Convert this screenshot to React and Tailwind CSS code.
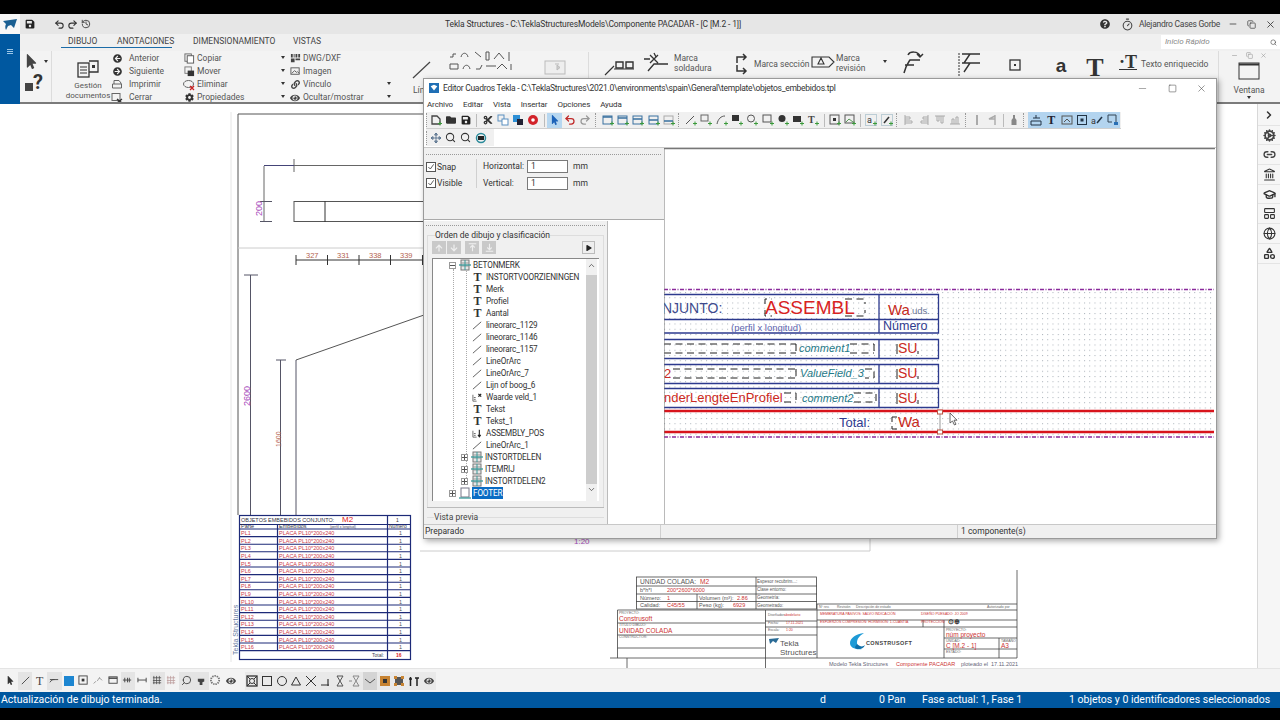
import {
  ChevronRight, Cog, Landmark, GraduationCap, LayoutPanelTop, Globe, Shapes, Timer, Minus, Square, X, Copy, Search,
  Undo2, Redo2, History, Link2, ChevronUp, ChevronDown,
} from "lucide-react";
import {
  FaArrowCircleLeft, FaArrowCircleRight, FaCog, FaQuestionCircle, FaSave, FaMousePointer, FaLink, FaEye, FaPlay, FaFolder,
  FaCut, FaArrowUp, FaArrowDown,
} from "react-icons/fa";

function Ic({ children, size = 12, box = 12, className = "" }) {
  return (
    <svg width={size} height={size} viewBox={`0 0 ${box} ${box}`} fill="none" className={"shrink-0 " + className}>
      {children}
    </svg>
  );
}

function Caret({ className = "" }) {
  return <span className={"block w-0 h-0 border-x-[2.5px] border-x-transparent border-t-[3px] border-t-[#333] " + className} />;
}

/* ribbon */
function RibbonList({ items, className = "" }) {
  return (
    <div className={"flex flex-col h-[53px] pt-[1px] " + className}>
      {items.map(([icon, label]) => (
        <div key={label} className="flex items-center h-[13px] shrink-0">
          <span className="w-[12px] flex justify-center shrink-0">{icon}</span>
          <span className="text-[8.5px] text-[#555] leading-none whitespace-nowrap ml-[inherit]">{label}</span>
        </div>
      ))}
    </div>
  );
}

const docIcon = (
  <Ic size={11}>
    <rect x="1" y="1" width="7" height="8" stroke="#666" />
    <rect x="3.5" y="3" width="7" height="8" fill="#fff" stroke="#555" />
  </Ic>
);
const docX = (
  <Ic size={12}>
    <rect x="1" y="1.5" width="8" height="7" stroke="#666" />
    <path d="M6 7l5 4M11 7l-5 4" stroke="#333" strokeWidth="1.4" />
  </Ic>
);

function Ribbon() {
  return (
    <div className="flex h-[53px] bg-[#f3f3f3] border-b-2 border-[#7b7b7b] overflow-hidden">
      <div className="w-[32px] shrink-0 border-r border-[#dcdcdc] flex flex-col pl-[4px] pt-[3px] gap-[2px]">
        <div className="flex items-center gap-[5px]">
          <FaMousePointer size={15} color="#444" />
          <Caret />
        </div>
        <div className="flex items-end pl-[1px]">
          <span className="block w-[8px] h-[8px] bg-[#444] mb-[2px]" />
          <span className="text-[20px] font-bold leading-[22px] text-[#333]">?</span>
        </div>
      </div>
      <div className="w-[44px] ml-[14px] shrink-0 flex flex-col items-center pt-[9px]">
        <svg width="22" height="18" viewBox="0 0 22 18" fill="none" className="shrink-0">
          <rect x="1" y="3" width="11" height="14" stroke="#333" strokeWidth="1.3" />
          <path d="M3 7h7M3 10h7M3 13h7" stroke="#333" />
          <path d="M12 1h9v11h-9" stroke="#333" strokeWidth="1.3" />
          <rect x="15" y="5" width="3" height="3" fill="#333" />
        </svg>
        <span className="text-[8px] text-[#555] leading-[10px] mt-[3px] text-center">Gestión<br />documentos</span>
      </div>
      <RibbonList
        className="ml-[1px] w-[72px] shrink-0 [&_span+span]:ml-[6px]"
        items={[
          [<FaArrowCircleLeft size={9} color="#333" />, "Anterior"],
          [<FaArrowCircleRight size={9} color="#333" />, "Siguiente"],
          [<Ic size={12}><path d="M3 5V1.5h5L10 4v1M1.5 5h9v4h-9z" stroke="#666" /></Ic>, "Imprimir"],
          [docX, "Cerrar"],
        ]}
      />
      <RibbonList
        className="w-[98px] shrink-0 [&_span+span]:ml-[2px]"
        items={[
          [docIcon, "Copiar"],
          [<Ic size={11}><rect x="1" y="1" width="7" height="7" stroke="#777" /><rect x="4" y="5" width="7" height="6" fill="#333" /></Ic>, "Mover"],
          [<Ic size={12}><ellipse cx="5.5" cy="5" rx="5" ry="3.5" stroke="#666" /><path d="M7 7l4 4M11 7l-4 4" stroke="#c22" strokeWidth="1.3" /></Ic>, "Eliminar"],
          [<FaCog size={9} color="#333" />, "Propiedades"],
        ]}
      />
      <div className="flex flex-col justify-between h-[52px] py-[5px] w-[8px] shrink-0">
        <Caret /><Caret /><Caret /><Caret />
      </div>
      <RibbonList
        className="w-[97px] shrink-0 [&_span+span]:ml-[2px]"
        items={[
          [<Ic size={11}><path d="M1 1h2v4H1zM4 1h1v4H4zM6 1h2v4H6zM9 1h2v4H9zM1 6h4v4H1zM6 6h5v2H6z" fill="#444" /></Ic>, "DWG/DXF"],
          [<Ic size={11}><rect x="1" y="2" width="9" height="7" stroke="#555" /><path d="M2 8l3-3 2 2 1-1 2 2" stroke="#555" /></Ic>, "Imagen"],
          [<FaLink size={9} color="#444" />, "Vínculo"],
          [<FaEye size={10} color="#444" />, "Ocultar/mostrar"],
        ]}
      />
      <div className="flex flex-col h-[52px] w-[5px] shrink-0 pt-[31px] gap-[10px] ml-[1px]">
        <Caret /><Caret />
      </div>
      <svg width="40" height="52" viewBox="0 0 40 52" fill="none" className="shrink-0 ml-[8px]">
        <path d="M13 27 L30 11" stroke="#444" strokeWidth="1.2" />
        <text x="13" y="42" fontSize="8.5" fill="#555">Lín</text>
      </svg>
      <svg width="135" height="52" viewBox="0 0 135 52" fill="none" className="shrink-0 ml-[4px]">
        <g stroke="#555">
          <path d="M6 6h3v-3h3M17 6c1-5 6-5 7 0M31 1l6 5M42 1h3v8h-3zM50 8l5-6 5 6M65 1v9" />
          <path d="M6 13h8v5H6zM19 18c1-5 6-5 7 0M32 18h4l2-4M42 15h10M53 18l5-5 5 5M67 13v6" />
        </g>
        <rect x="101" y="10" width="20" height="13" stroke="#bbb" fill="#eee" />
        <path d="M111 13h4M113 14l3 2.500-3 2.500z" fill="#ccc" stroke="#bbb" />
      </svg>
      <span className="w-px h-[50px] bg-[#dcdcdc] mt-[1px] ml-[9px]" />
      <svg width="50" height="52" viewBox="0 0 50 52" fill="none" className="shrink-0">
        <path d="M27 11h7v6h-7zM37 11h7v6h-7z" stroke="#333" strokeWidth="1.4" />
        <path d="M16 24l9-9M25 18h20" stroke="#333" strokeWidth="1.2" />
      </svg>
      <svg width="28" height="52" viewBox="0 0 28 52" fill="none" className="shrink-0 ml-[3px]">
        <path d="M8 4l8 8M16 4l-8 8M2 8l6 0M12 2l2 4M6 20l6-7h14" stroke="#333" strokeWidth="1.3" />
      </svg>
      <div className="w-[60px] ml-[4px] shrink-0 text-[8.5px] leading-[10px] text-[#555] pt-[2px]">Marca<br />soldadura</div>
      <svg width="19" height="52" viewBox="0 0 19 52" fill="none" className="shrink-0">
        <path d="M3 12V6h8M9 3l3 3-3 3M3 14v6h8M9 17l3 3-3 3" stroke="#333" strokeWidth="1.5" />
      </svg>
      <div className="w-[56px] ml-[1px] shrink-0 text-[8.5px] text-[#555] pt-[7px] whitespace-nowrap">Marca sección</div>
      <svg width="25" height="52" viewBox="0 0 25 52" fill="none" className="shrink-0 ml-[1px]">
        <path d="M1 6h17l5 5-5 5H1zM10 7l3 6H7z" stroke="#333" strokeWidth="1.1" />
      </svg>
      <div className="w-[47px] shrink-0 text-[8.5px] leading-[10px] text-[#555] pt-[2px]">Marca<br />revisión</div>
      <Caret className="mt-[9px] shrink-0" />
      <svg width="134" height="52" viewBox="0 0 134 52" fill="none" className="shrink-0 ml-[9px]">
        <path d="M12 4c2-4 10-4 12 1M21 3l3 3 3-3M8 22c2-8 4-10 6-13h10M9 14h9" stroke="#333" strokeWidth="1.5" />
        <path d="M63 2v24" stroke="#333" strokeWidth="1" strokeDasharray="2 1" />
        <path d="M66 3h18M68 12l6-9M66 12h18M68 21l6-9" stroke="#333" strokeWidth="1.4" />
        <rect x="114" y="9" width="10" height="10" stroke="#333" strokeWidth="1.3" />
        <rect x="118" y="13" width="2" height="2" fill="#333" />
      </svg>
      <div className="w-[34px] ml-[14px] shrink-0 flex flex-col items-center">
        <span className="text-[19px] font-bold leading-[24px] text-[#333] mt-[3px] font-['Liberation_Sans',sans-serif]">a</span>
        <span className="w-[16px] h-[2px] bg-[#333]" />
      </div>
      <span className="w-[34px] shrink-0 text-[26px] font-bold leading-[28px] text-[#333] text-center font-['Liberation_Serif',serif] mt-[3px]">T</span>
      <div className="flex items-start w-[96px] ml-[7px] shrink-0 pt-[1px]">
        <span className="text-[18px] font-bold leading-[20px] text-[#333] font-['Liberation_Serif',serif] underline w-[16px]">·T</span>
        <span className="text-[8.5px] text-[#555] ml-[6px] mt-[6px] whitespace-nowrap">Texto enriquecido</span>
      </div>
      <div className="w-px h-[52px] bg-[#dcdcdc] ml-[3px] shrink-0" />
      <div className="w-[60px] shrink-0 flex flex-col items-center">
        <div className="flex w-full justify-between px-[12px] pt-[1px] text-[#999]">
          <Minus size={7} /><Copy size={7} /><X size={7} />
        </div>
        <svg width="22" height="18" viewBox="0 0 22 18" fill="none" className="shrink-0 mt-[3px]">
          <rect x="1" y="1" width="20" height="16" stroke="#333" />
          <path d="M1 2.500h20" stroke="#333" strokeWidth="2" />
        </svg>
        <span className="text-[8.5px] text-[#555] leading-none mt-[6px]">Ventana</span>
        <Caret className="mt-[1px]" />
      </div>
    </div>
  );
}

/* main drawing, coordinates are page coordinates */
function Drawing() {
  const rows = Array.from({ length: 16 }, (_, i) => i);
  const rowH = 7.6;
  const top = 529;
  return (
    <svg width="1257" height="564" viewBox="0 104 1257 564" fill="none" className="shrink-0 bg-white font-['Liberation_Sans',sans-serif]">
      <path d="M231 112V662" stroke="#e6e6e6" />
      <path d="M238 114H424M238 114V515" stroke="#555" />
      <path d="M238 248H424" stroke="#ccc" />
      {/* upper view */}
      <path d="M294 165.500H424M264 166V222M294 159V172" stroke="#666" />
      <path d="M264 165.500H294" stroke="#447" />
      <path d="M260 201.500H272M260 221.500H272" stroke="#556" />
      <rect x="294" y="201.500" width="130" height="20" stroke="#555" />
      <path d="M325 201V222" stroke="#333" />
      <text transform="translate(262 216) rotate(-90)" fontSize="9" fill="#a84dbb">200</text>
      {/* dims */}
      <path d="M296 260H424M296 255V265M327.500 255V265M359 255V265M390.500 255V265M422.500 255V265" stroke="#333" />
      {[["327", 306], ["331", 337], ["338", 369], ["339", 400]].map(([t, x]) => (
        <text key={t} x={x} y="258" fontSize="7.500" fill="#b4634f">{t}</text>
      ))}
      <path d="M250.500 275V515M244 275H258M280.500 360V515M276 360H286M296 360V515" stroke="#556" />
      <path d="M296 360L424 315" stroke="#555" />
      <text transform="translate(250 406) rotate(-90)" fontSize="9" fill="#a84dbb">2600</text>
      <text transform="translate(281 447) rotate(-90)" fontSize="7" fill="#b4634f">1600</text>

      {/* embedded objects table */}
      <g stroke="#1d2a78">
        <rect x="239.500" y="515.500" width="171" height="144" strokeWidth="1.2" />
        <path d="M239 524.500H410M387.500 515V659M277.500 524V651" strokeWidth="1.2" />
        <path d={rows.map((i) => `M239 ${top + i * rowH}H410`).join("") + `M239 ${top + 16 * rowH}H410`} strokeWidth="1.1" />
      </g>
      <text x="241" y="522" fontSize="5.500" fill="#334">OBJETOS EMBEBIDOS CONJUNTO:</text>
      <text x="342" y="522" fontSize="8" fill="#d22">M2</text>
      <text x="396" y="522" fontSize="5" fill="#333">1</text>
      <text x="241" y="528" fontSize="5.500" fill="#334">Parte</text>
      <text x="279" y="528" fontSize="5.500" fill="#334">Embebidos</text>
      <text x="330" y="528" fontSize="3.500" fill="#445">(perfil x longitud)</text>
      <text x="389" y="528" fontSize="5" fill="#334">Número</text>
      {rows.map((i) => (
        <g key={i}>
          <text x="241" y={top + 6.2 + i * rowH} fontSize="5.500" fill="#cc3b4a">{`PL${i + 1}`}</text>
          <text x="279" y={top + 6.2 + i * rowH} fontSize="5.500" fill="#cc3b4a">PLACA PL10*200x240</text>
          <text x="399" y={top + 6.2 + i * rowH} fontSize="5.500" fill="#555">1</text>
        </g>
      ))}
      <text x="372" y="657" fontSize="5" fill="#445">Total:</text>
      <text x="396" y="657" fontSize="5" fill="#d22" fontWeight="bold">16</text>
      <text transform="translate(238 655) rotate(-90)" fontSize="7" fill="#667aa0">Tekla Structures</text>

      {/* window outline behind the dialog */}
      <path d="M870 539V551H420" stroke="#ccc" />
      <text x="574" y="544" fontSize="8" fill="#a84dbb">1:20</text>

      {/* title block */}
      <g stroke="#444" strokeWidth="0.800">
        <rect x="636.500" y="577" width="180" height="32" />
        <path d="M636 586H817M636 594H817M636 601.500H817M756 577V609M697 594V609" />
        <path d="M617.500 610H1017M617.500 610V658M765.500 610V668M817 604V658M617.500 623H765M617.500 635H765M617.500 648H765M765 621H817M765 627H817M765 635H817M817 604H1017M817 620H1017M817 627H1017M1017 570V658M944 620V658M944 638H1017M944 649H1017M999 638V658M610 658H1017M627 658V668M923 620V627" />
      </g>
      <g fontSize="5.500" fill="#555">
        <text x="640" y="584" fontSize="6.600">UNIDAD COLADA:</text>
        <text x="700" y="584" fontSize="6.600" fill="#c33">M2</text>
        <text x="640" y="592">b*h*l</text>
        <text x="667" y="592" fill="#c33">200*2600*6000</text>
        <text x="640" y="600">Número:</text>
        <text x="667" y="600" fill="#c33">1</text>
        <text x="699" y="600">Volumen (m³):</text>
        <text x="737" y="600" fill="#c33">2.86</text>
        <text x="640" y="607">Calidad:</text>
        <text x="667" y="607" fill="#c33">C45/55</text>
        <text x="699" y="607">Peso (kg):</text>
        <text x="733" y="607" fill="#c33">6929</text>
        <text x="757" y="583" fontSize="4.500">Espesor recubrim...:</text>
        <text x="757" y="591" fontSize="4.500">Clase entorno:</text>
        <text x="757" y="599" fontSize="4.500">Geometría:</text>
        <text x="757" y="607" fontSize="4.500">Geometrado:</text>
      </g>
      <g fontSize="3.500" fill="#666">
        <text x="619" y="614">PROYECTO:</text>
        <text x="619" y="626">TÍTULO DIBUJO:</text>
        <text x="619" y="638">CONSTRUCTOR:</text>
        <text x="768" y="616">Diseñador:</text>
        <text x="784" y="616" fill="#c33">abedelario</text>
        <text x="768" y="624">Fecha:</text>
        <text x="786" y="624" fill="#c33">17.11.2021</text>
        <text x="768" y="631">Escala:</text>
        <text x="786" y="631" fill="#c33">1:20</text>
        <text x="819" y="608">Nº rev.</text>
        <text x="837" y="608">Revisión</text>
        <text x="856" y="608">Descripción de estado</text>
        <text x="987" y="608">Autorizado por</text>
        <text x="820" y="615" fill="#c33">MEMBRATURA PASIVOS: SALVO INDICACIÓN</text>
        <text x="820" y="623" fill="#c33">ESFUERZOS COMPRESIÓN: HORMIGÓN: 1-CUANTÍA</text>
        <text x="921" y="615" fill="#c33">DISEÑO PUESADO: JO 2009</text>
        <text x="921" y="623" fill="#c33">PROTECCIÓN:</text>
        <text x="946" y="631">PROYECTO:</text>
        <text x="946" y="642">UNIDAD:</text>
        <text x="1001" y="642">TAMAÑO</text>
        <text x="946" y="653">ESTADO:</text>
      </g>
      <g fontSize="6.500" fill="#c33">
        <text x="619" y="621">Construsoft</text>
        <text x="619" y="633">UNIDAD COLADA</text>
        <text x="946" y="637">núm proyecto</text>
        <text x="946" y="648">C  [M.2 - 1]</text>
        <text x="1001" y="648">A3</text>
      </g>
      <text x="948" y="624" fontSize="7" fill="#333" fontWeight="bold">⊙⊕</text>
      {/* Tekla logo */}
      <path d="M769 639l10-1-3 5-3-2-3 3z" fill="#2a6b96" />
      <text x="780" y="646" fontSize="8" fill="#555">Tekla</text>
      <text x="780" y="655" fontSize="8" fill="#555">Structures</text>
      {/* Construsoft logo */}
      <path d="M864 633c-8 1-14 5-14 10s6 7 12 6c-4-2-5-4-5-6 0-4 2-7 7-10z" fill="#1d9ad6" />
      <path d="M857 644c3 3 6 3 8 1-1 3-4 4-7 4-2 0-3-1-3-2z" fill="#0d6da8" />
      <text x="866" y="645" fontSize="5.500" fontWeight="bold" fill="#444" letterSpacing=".4">CONSTRUSOFT</text>
      {/* footer */}
      <g fontSize="5.500" fill="#667">
        <text x="829" y="666">Modelo Tekla Structures</text>
        <text x="896" y="666" fill="#c33">Componente PACADAR</text>
        <text x="961" y="666">ploteado el</text>
        <text x="991" y="666">17.11.2021</text>
      </g>
    </svg>
  );
}

/* dialog toolbar icon sets */
const plus = <path d="M8 9.500h4M10 7.500v4" stroke="#3a9a3a" strokeWidth="1" />;
const bk = "#444";
const toolRow = [
  ["new", <Ic><path d="M2 2h5l3 3v5H2z" stroke={bk} strokeWidth="1.3" />{plus}</Ic>],
  ["open", <FaFolder size={10} color="#333" />],
  ["save", <FaSave size={10} color="#222" />],
  ["s", null],
  ["cut", <FaCut size={10} color="#333" />],
  ["copy", <Ic><rect x="1" y="1" width="6" height="6" stroke="#5a8fc0" /><rect x="5" y="5" width="6" height="6" stroke="#5a8fc0" fill="#fff" /></Ic>],
  ["paste", <Ic><rect x="1" y="1" width="7" height="7" fill="#2d8fd5" /><rect x="5" y="5" width="6" height="6" fill="#223" /></Ic>],
  ["stop", <Ic><circle cx="6" cy="6" r="5" fill="#d2232a" /><circle cx="6" cy="6" r="1.800" fill="#fff" /></Ic>],
  ["s2", null],
  ["arrow", <FaMousePointer size={10} color="#1c62b8" />, true],
  ["undo", <Undo2 size={12} color="#c02a2a" strokeWidth={2.5} />],
  ["redo", <Redo2 size={12} color="#999" strokeWidth={2.5} />],
  ["g1", "grip"],
  ...["a", "b", "c", "d", "e"].map((k, i) => [
    "tb" + k,
    <Ic><rect x="1" y="2" width="9" height="8" stroke={i === 4 ? "#aaa" : "#39709f"} /><path d={`M1 ${3 + i}h9`} stroke="#39709f" strokeWidth="1.5" />{plus}</Ic>,
  ]),
  ["g2", "grip"],
  ["l1", <Ic><path d="M1 10L9 2" stroke="#555" />{plus}</Ic>],
  ["l2", <Ic><rect x="1" y="1" width="7" height="6" stroke="#666" />{plus}</Ic>],
  ["l3", <Ic><path d="M1 10c1-5 4-8 8-8" stroke="#555" />{plus}</Ic>],
  ["l4", <Ic><rect x="1" y="1" width="7" height="6" fill="#333" />{plus}</Ic>],
  ["l5", <Ic><circle cx="5" cy="4.500" r="3.500" stroke="#555" />{plus}</Ic>],
  ["l6", <Ic><rect x="1" y="1" width="8" height="7" stroke="#555" />{plus}</Ic>],
  ["l7", <Ic><circle cx="5" cy="4.500" r="3.500" fill="#333" />{plus}</Ic>],
  ["l8", <Ic><rect x="1" y="2" width="8" height="6" fill="#333" />{plus}</Ic>],
  ["l9", <Ic><text x="1" y="9" fontSize="10" fontWeight="bold" fill="#444" fontFamily="Liberation Serif">T</text>{plus}</Ic>],
  ["s3", null],
  ["m1", <Ic><rect x="1" y="1" width="9" height="9" stroke="#555" /><rect x="4" y="4" width="3" height="3" fill="#333" />{plus}</Ic>],
  ["m2", <Ic><rect x="1" y="1" width="9" height="8" stroke="#555" /><path d="M2 8l3-3 4 3" stroke="#5a9a5a" />{plus}</Ic>],
  ["s4", null],
  ["m3", <Ic><rect x="0.500" y="0.500" width="11" height="11" stroke="#8ab" strokeDasharray="1 1" /><text x="2" y="9" fontSize="9" fill="#333">a</text>{plus}</Ic>],
  ["m4", <Ic><rect x="0.500" y="0.500" width="11" height="11" stroke="#8ab" strokeDasharray="1 1" /><path d="M3 9l5-6" stroke="#333" strokeWidth="1.500" />{plus}</Ic>],
  ["g3", "grip"],
  ["n1", <Ic><path d="M2 1v10M2 3h5v2H2M2 7h7v2H2" stroke="#aaa" /></Ic>],
  ["n2", <Ic><path d="M10 1v10M10 3H5v2h5M10 7H3v2h7" stroke="#aaa" /></Ic>],
  ["n3", <Ic><path d="M1 2h10M3 2v5h2V2M7 2v7h2V2" stroke="#aaa" /></Ic>],
  ["n4", <Ic><path d="M1 10h10M3 10V5h2v5M7 10V3h2v7" stroke="#aaa" /></Ic>],
  ["g4", "grip"],
  ["o1", <Ic><path d="M5 1h2v10H5z" fill="#aaa" /></Ic>],
  ["o2", <Ic><path d="M9 1v10M9 2L3 5h6" stroke="#aaa" strokeWidth="1.400" /></Ic>],
  ["s5", null],
  ["o3", <Ic><path d="M5 1h2v3l1.500 2v5h-5V6L5 4z" fill="#888" /></Ic>],
  ["g5", "grip"],
];
const blueRow = [
  <Ic><path d="M6 1v3M3 4h7M1 7h10v4H1z" stroke="#234" /></Ic>,
  <span className="text-[12px] font-bold leading-none text-[#223] font-['Liberation_Serif',serif]">T</span>,
  <Ic><rect x="1" y="2" width="10" height="8" stroke="#555" /><path d="M3 8l3-3 3 3" stroke="#555" /></Ic>,
  <Ic><rect x="1.500" y="1.500" width="9" height="9" stroke="#234" /><rect x="4.500" y="4.500" width="3" height="3" fill="#234" /></Ic>,
  <Ic><text x="0" y="10" fontSize="9" fill="#333">a</text><path d="M6 9l5-6" stroke="#234" strokeWidth="1.500" /></Ic>,
  <Ic><path d="M1 1h8v7" stroke="#345" /><path d="M1 1v7h4" stroke="#345" /><rect x="7" y="8" width="4" height="3" fill="#2a6fb5" /></Ic>,
];

function Grip({ first }) {
  return <span className={"h-[14px] w-[3px] border-l border-dotted border-[#999] " + (first ? "mr-[-1px]" : "mx-[2px]")} />;
}

function DialogToolbar() {
  return (
    <div className="flex h-[17px] pl-[2px] items-center bg-white">
      <div className="flex items-center h-full bg-[#f0f0f0] pr-[1px] border-b border-[#cfcfcf]">
        <Grip first />
        {toolRow.map(([k, icon, active]) => {
          if (icon === null) return <span key={k} className="w-px h-[13px] bg-[#bbb] mx-[2.5px]" />;
          if (icon === "grip") return <Grip key={k} />;
          return (
            <span key={k} className={"w-[15.3px] h-[15px] flex items-center justify-center " + (active ? "bg-[#b7d7f0]" : "")}>
              {icon}
            </span>
          );
        })}
        <div className="flex items-center h-full bg-[#b3d4ef]">
          {blueRow.map((icon, i) => (
            <span key={i} className="w-[15.3px] h-[15px] flex items-center justify-center">{icon}</span>
          ))}
        </div>
      </div>
    </div>
  );
}

function Check({ label }) {
  return (
    <div className="flex items-center gap-[1px] h-[10px]">
      <span className="w-[10px] h-[10px] border border-[#555] bg-white flex items-center justify-center">
        <Ic size={8}><path d="M2 6l3 3 5-7" stroke="#444" strokeWidth="1.300" /></Ic>
      </span>
      <span className="text-[8.5px] text-[#333] leading-none">{label}</span>
    </div>
  );
}

function Field({ label }) {
  return (
    <div className="flex items-center h-[13px]">
      <span className="w-[44px] text-[8.5px] text-[#333]">{label}</span>
      <span className="w-[41px] h-[13px] border border-[#7a7a7a] bg-white text-[8.5px] leading-[11px] pl-[3px] text-[#333]">1</span>
      <span className="ml-[5px] text-[8.5px] text-[#333]">mm</span>
    </div>
  );
}

const tIcon = <span className="font-['Liberation_Serif',serif] font-bold text-[12px] leading-none text-[#333] w-[10px] text-center">T</span>;
const lineIcon = <Ic size={11}><path d="M1 10L10 2" stroke="#555" /></Ic>;
const blockIcon = (
  <Ic size={12}>
    <rect x="2" y="1" width="8" height="10" fill="#e6e6e6" stroke="#777" />
    <path d="M2 4h8M2 7h8" stroke="#999" />
    <path d="M0 6h12" stroke="#3a9a9a" strokeWidth="1.300" />
    <path d="M6 1v10" stroke="#3a9a9a" />
  </Ic>
);
const valIcon = (
  <Ic size={11}>
    <path d="M1 3v7h4M2 6h2M2 8h2" stroke="#666" />
    <path d="M7 2l3 3M10 2l-3 3" stroke="#222" strokeWidth="1.400" />
  </Ic>
);
const asmIcon = (
  <Ic size={11}>
    <path d="M1 3v7h4M2 6h2M2 8h2" stroke="#666" />
    <path d="M8 2v7M6.500 7.500L8 9.500l1.500-2" stroke="#222" strokeWidth="1.200" />
  </Ic>
);
const treeRows = [
  ["INSTORTVOORZIENINGEN", tIcon], ["Merk", tIcon], ["Profiel", tIcon], ["Aantal", tIcon],
  ["lineorarc_1129", lineIcon], ["lineorarc_1146", lineIcon], ["lineorarc_1157", lineIcon],
  ["LineOrArc", lineIcon], ["LineOrArc_7", lineIcon], ["Lijn of boog_6", lineIcon],
  ["Waarde veld_1", valIcon], ["Tekst", tIcon], ["Tekst_1", tIcon], ["ASSEMBLY_POS", asmIcon],
  ["LineOrArc_1", lineIcon],
];

function Expander({ minus }) {
  return (
    <span className="w-[7px] h-[7px] border border-[#999] bg-white flex items-center justify-center relative shrink-0">
      <span className="block w-[5px] h-px bg-[#555]" />
      {!minus && <span className="absolute block w-px h-[5px] bg-[#555]" />}
    </span>
  );
}

function TreeRow({ indent, expander, minus, icon, label, selected }) {
  return (
    <div className="flex items-center h-[12px]" style={{ paddingLeft: indent }}>
      <span className="w-[9px] flex items-center shrink-0">{expander && <Expander minus={minus} />}</span>
      <span className="w-[13px] flex justify-center shrink-0">{icon}</span>
      <span className={"text-[8.2px] tracking-[-0.15px] leading-[12px] ml-[1px] px-[1px] whitespace-nowrap " + (selected ? "bg-[#0a6cc4] text-white" : "text-[#333]")}>{label}</span>
    </div>
  );
}

function Tree() {
  return (
    <div className="relative mx-[7px] mt-[4px] h-[243px] border border-[#888] border-r-0 border-b-0 bg-white flex overflow-hidden">
      <div className="relative flex-1 min-w-0 overflow-hidden">
        <span className="absolute left-[20px] top-[10px] h-[226px] border-l border-dotted border-[#aaa]" />
        <span className="absolute left-[33px] top-[10px] h-[213px] border-l border-dotted border-[#aaa]" />
        <TreeRow indent={16} expander minus icon={blockIcon} label="BETONMERK" />
        {treeRows.map(([label, icon]) => (
          <TreeRow key={label} indent={29} icon={icon} label={label} />
        ))}
        <TreeRow indent={28} expander icon={blockIcon} label="INSTORTDELEN" />
        <TreeRow indent={28} expander icon={blockIcon} label="ITEMRIJ" />
        <TreeRow indent={28} expander icon={blockIcon} label="INSTORTDELEN2" />
        <TreeRow indent={16} expander icon={<Ic size={12}><rect x="2" y="1" width="8" height="9" stroke="#778" /><path d="M0 11h12" stroke="#3a9a9a" strokeWidth="1.300" /></Ic>} label="FOOTER" selected />
      </div>
      <div className="w-[11px] mr-[2px] shrink-0 flex flex-col items-center bg-[#f0f0f0]">
        <ChevronUp size={9} color="#444" className="mt-[2px]" />
        <span className="w-full h-[209px] bg-[#cdcdcd] mt-[5px]" />
        <ChevronDown size={9} color="#444" className="mt-[1px]" />
      </div>
    </div>
  );
}

function OrderButton({ children }) {
  return <span className="w-[14px] h-[13px] bg-[#c9c9c9] flex items-center justify-center">{children}</span>;
}

function Canvas() {
  const dash = { stroke: "#222", strokeDasharray: "7 4.5", strokeWidth: 1 };
  return (
    <svg width="551" height="376" viewBox="664 148 551 376" fill="none" className="shrink-0 bg-white font-['Liberation_Sans',sans-serif]">
      <defs>
        <pattern id="dots" x="664" y="292" width="5.250" height="5.250" patternUnits="userSpaceOnUse">
          <rect width="1" height="1" fill="#a8b0b8" />
        </pattern>
      </defs>
      <rect x="664" y="290" width="550" height="146" fill="url(#dots)" />
      <path d="M664 148.500H1215" stroke="#777" strokeWidth="1.500" />
      <path d="M664 289.500H1214M664 437H1214" stroke="#8a2a9c" strokeWidth="1.600" strokeDasharray="4 1.500 1 1.500" />
      <g stroke="#2d3a8e" strokeWidth="1.300">
        <path d="M664 294.500H938.500V333H664M664 319.500H938M879 294V333" />
        <path d="M664 339.500H938.500V358.500H664M879 339V358" />
        <path d="M664 364.500H938.500V383.500H664M879 364V383" />
        <path d="M664 388.500H938.500V407.500H664M879 388V407" />
      </g>
      <path d="M664 411H1214M664 432H1214" stroke="#d8141c" strokeWidth="2.400" />
      <path d="M765 304V299H772M845 299H865V304M765 310V316H772M845 316H865V310" style={dash} />
      <text x="651" y="313" fontSize="14" fill="#3e4a8c">ONJUNTO:</text>
      <text x="765" y="314" fontSize="19" fill="#d8231f">ASSEMBL</text>
      <text x="888" y="315" fontSize="15" fill="#c62a20">Wa</text>
      <text x="912" y="314" fontSize="9.500" fill="#6a7596">uds.</text>
      <text x="883" y="330" fontSize="12.500" fill="#2f3a8e">Número</text>
      <text x="731" y="331" fontSize="9.500" fill="#5b62ad">(perfil x longitud)</text>

      <path d="M664 344H796M664 353H796M796 344V353" style={dash} />
      <text x="799" y="352" fontSize="11" fontStyle="italic" fill="#1f7a88">comment1</text>
      <path d="M850 344H874M874 344V353M850 353H874" style={dash} />
      <text x="898" y="353" fontSize="14" fill="#cc2a22">SU</text>
      <path d="M897 344V354M918 351V354" stroke="#222" />

      <text x="664" y="378" fontSize="13" fill="#cc2a22">2</text>
      <path d="M673 369H796M673 378H796M796 369V378" style={dash} />
      <text x="800" y="377" fontSize="11" fontStyle="italic" fill="#1f7a88">ValueField_3</text>
      <path d="M865 369H874V378H865" style={dash} />
      <text x="898" y="378" fontSize="14" fill="#cc2a22">SU</text>
      <path d="M897 369V379M918 376V379" stroke="#222" />

      <text x="664" y="402" fontSize="13" fill="#cc2a22">nderLengteEnProfiel</text>
      <path d="M784 393H796M784 402H796M796 393V402" style={dash} />
      <text x="802" y="402" fontSize="11" fontStyle="italic" fill="#1f7a88">comment2</text>
      <path d="M854 393H876V402H854" style={dash} />
      <text x="898" y="403" fontSize="14" fill="#cc2a22">SU</text>
      <path d="M897 393V404M918 400V404" stroke="#222" />

      <text x="839" y="427" fontSize="13" fill="#2f3a8e">Total:</text>
      <path d="M892 422V417H897M892 426V429H897" stroke="#222" />
      <text x="898" y="427" fontSize="15" fill="#c62a20">Wa</text>
      <path d="M940 412V432" stroke="#999" />
      <rect x="937.500" y="410" width="5" height="4" fill="#fff" stroke="#b54" />
      <rect x="937.500" y="430" width="5" height="4" fill="#fff" stroke="#b54" />
      <path d="M950 413l0 10 2.500-2 2 4 1.500-.8-2-4h3z" fill="#fff" stroke="#444" strokeWidth=".8" />
      <path d="M664 148V524" stroke="#777" />
    </svg>
  );
}

function Dialog() {
  return (
    <div className="absolute left-[423px] top-[78px] w-[794px] h-[461px] bg-white border border-[#9a9a9a] shadow-[2px_2px_6px_rgba(0,0,0,0.35)] flex flex-col text-[#333] overflow-hidden">
      <div className="flex items-center h-[18px] shrink-0 pl-[5px]">
        <Ic size={10}><rect width="12" height="12" fill="#1f6fb5" /><path d="M2 4l4-2 4 2-4 5z" fill="#fff" /></Ic>
        <span className="text-[8.5px] tracking-[-0.28px] ml-[4px] whitespace-nowrap text-[#333]">Editor Cuadros Tekla - C:\TeklaStructures\2021.0\environments\spain\General\template\objetos_embebidos.tpl</span>
        <div className="flex ml-auto text-[#444] w-[70px] justify-between mr-[9px]">
          <Minus size={11} strokeWidth={1} />
          <Square size={9} strokeWidth={1.4} className="mt-[1px]" />
          <X size={11} strokeWidth={1.2} />
        </div>
      </div>
      <div className="flex items-center gap-[10px] h-[15px] shrink-0 pl-[3px] text-[8px] tracking-[-0.1px] text-[#333] leading-none">
        <span>Archivo</span><span>Editar</span><span>Vista</span><span>Insertar</span><span>Opciones</span><span>Ayuda</span>
      </div>
      <DialogToolbar />
      <div className="flex h-[17px] pl-[2px] shrink-0 bg-white">
        <div className="flex items-center bg-[#f0f0f0]">
          <Grip first />
          <span className="w-[15px] flex justify-center"><Ic><path d="M6 1v10M1 6h10M6 1L4.500 3h3zM6 11L4.500 9h3zM1 6l2-1.500v3zM11 6L9 4.500v3z" stroke="#357" strokeWidth=".7" /></Ic></span>
          <span className="w-[15px] flex justify-center"><Search size={11} color="#333" strokeWidth={2.2} /></span>
          <span className="w-[15px] flex justify-center"><Search size={11} color="#333" strokeWidth={2.2} /></span>
          <span className="w-[15px] flex justify-center"><Ic><circle cx="6" cy="6" r="4.500" stroke="#2a8a9a" strokeWidth="1.500" /><rect x="3" y="4" width="6" height="4" fill="#222" /></Ic></span>
          <span className="w-[6px]" />
        </div>
      </div>
      <div className="flex flex-1 min-h-0 border-t border-[#c8c8c8] mt-[1px]">
        <div className="w-[240px] shrink-0 flex flex-col">
          <div className="h-[72px] shrink-0 bg-[#f0f0f0] border-b border-[#aaa] relative flex pl-[2px] pt-[6px]">
            <span className="absolute left-[2px] right-[3px] top-[6px] border-t border-dotted border-[#999]" />
            <div className="flex flex-col w-[50px] gap-[6px] pt-[8px] shrink-0">
              <Check label="Snap" />
              <Check label="Visible" />
            </div>
            <div className="border-l border-[#d0d0d0] h-[29px] mt-[5px] pl-[6px] flex flex-col gap-[4px] pt-[1px]">
              <Field label="Horizontal:" />
              <Field label="Vertical:" />
            </div>
          </div>
          <div className="flex-1 flex bg-white mt-[1px]">
            <div className="w-[184px] bg-[#f0f0f0] border-r border-[#bbb] flex flex-col relative">
              <span className="mx-[2px] mt-[4px] border-t border-dotted border-[#999]" />
              <div className="mx-[3px] mt-[9px] border-t border-x border-[#ddd] relative pt-[5px] h-[272px]">
                <span className="absolute left-[7px] -top-[5px] bg-[#f0f0f0] text-[8.5px] leading-none text-[#333]">Orden de dibujo y clasificación</span>
                <div className="flex items-center px-[4px]">
                  <OrderButton><FaArrowUp size={8} color="#eee" /></OrderButton>
                  <span className="w-[1px]" />
                  <OrderButton><FaArrowDown size={8} color="#eee" /></OrderButton>
                  <span className="w-[4px]" />
                  <OrderButton><Ic size={9}><path d="M1 1h10" stroke="#eee" strokeWidth="1.500" /><path d="M6 3v8M3 6l3-3 3 3" stroke="#eee" strokeWidth="1.500" /></Ic></OrderButton>
                  <span className="w-[3px]" />
                  <OrderButton><Ic size={9}><path d="M1 11h10" stroke="#eee" strokeWidth="1.500" /><path d="M6 1v8M3 6l3 3 3-3" stroke="#eee" strokeWidth="1.500" /></Ic></OrderButton>
                  <span className="ml-auto w-[13px] h-[13px] mr-[4px] border border-[#bbb] flex items-center justify-center bg-[#eee]"><FaPlay size={6} color="#222" /></span>
                </div>
                <div className="-mx-[3px]"><Tree /></div>
              </div>
              <div className="mx-[3px] border-t border-[#bbb]" />
              <div className="mx-[3px] mt-[9px] border-t border-[#ddd] relative">
                <span className="absolute left-[7px] -top-[5px] bg-[#f0f0f0] text-[8.5px] leading-none text-[#444]">Vista previa</span>
              </div>
            </div>
            <div className="flex-1 bg-white" />
          </div>
        </div>
        <Canvas />
      </div>
      <div className="flex items-center h-[14px] shrink-0 bg-[#f0f0f0] border-t border-[#c8c8c8] text-[8.5px] text-[#333]">
        <span className="w-[236px] pl-[1px]">Preparado</span>
        <span className="w-[297px] h-full border-l border-[#d0d0d0]" />
        <span className="h-full border-l border-[#d0d0d0] pl-[3px] leading-[13px]">1 componente(s)</span>
      </div>
    </div>
  );
}

/* bottom bar */
function BottomTools() {
  const s = "#444";
  const left = [
    <FaMousePointer size={9} color="#333" />,
    <Ic size={11}><path d="M2 10L10 2" stroke={s} /></Ic>,
    <span className="font-['Liberation_Serif',serif] text-[12px] leading-none text-[#444]">T</span>,
    <Ic size={11}><path d="M1 5h9M1 8c2-3 3-3 5-3" stroke={s} /></Ic>,
    <span className="block w-[10px] h-[10px] bg-[#1d86d1]" />,
    <Ic size={11}><rect x="1" y="1" width="9" height="9" stroke={s} /><rect x="4" y="4" width="3" height="3" fill="#333" /></Ic>,
    <Ic size={11}><path d="M1 9l2-2M5 6l2-3 3 3" stroke={s} strokeDasharray="1 .6" /></Ic>,
    <Ic size={11}><rect x="1" y="2" width="9" height="7" stroke={s} /><path d="M1 3.500h9" stroke={s} strokeWidth="1.500" /></Ic>,
    <Ic size={11}><path d="M1 5.500h9M3 3v5M6 3v5M8 3v5" stroke={s} /></Ic>,
    <Ic size={11}><path d="M1 5.500h9M1 3v5M10 3v5" stroke={s} /></Ic>,
    <Ic size={11}><path d="M2 1v9M5 1v9M8 1v9M1 3h9M1 6h9M1 8.500h9" stroke={s} strokeWidth=".8" /></Ic>,
    <Ic size={11}><path d="M2 1v9M5 1v9M8 1v9M1 3h9M1 6h9M1 8.500h9" stroke="#b99" strokeWidth=".8" /></Ic>,
    <Search size={11} color="#444" className="-scale-x-100" />,
    <Ic size={11}><path d="M3 1v3M8 1v3M2 4h7v3l-2 1v3H4V8L2 7z" fill="#444" /></Ic>,
    <Ic size={11}><circle cx="5.500" cy="5.500" r="4.500" fill="none" stroke="#777" strokeDasharray="1.500 1" strokeWidth="2" /></Ic>,
    <FaEye size={10} color="#444" />,
  ];
  const right = [
    <Ic size={12}><rect x="1" y="1" width="10" height="10" stroke="#333" strokeWidth="1.300" /><path d="M1 1l10 10M11 1L1 11" stroke="#333" /><circle cx="6" cy="6" r="2.500" stroke="#333" fill="#eee" /></Ic>,
    <Ic size={12}><rect x="1.500" y="1.500" width="9" height="9" stroke="#333" /></Ic>,
    <Ic size={12}><circle cx="6" cy="6" r="4.500" stroke="#333" /></Ic>,
    <Ic size={12}><path d="M6 2l4.500 8h-9z" stroke="#333" /></Ic>,
    <Ic size={12}><path d="M1 1l10 10M11 1L1 11" stroke="#333" /></Ic>,
    <Ic size={12}><path d="M1 10h8M8 4v7" stroke="#333" strokeWidth="1.200" /></Ic>,
    <Ic size={12}><path d="M3 1h6L3 11h6M3 1l6 10" stroke="#555" /></Ic>,
    <Ic size={12}><path d="M4 1h6L4 11h6M4 1l6 10M0 6h3" stroke="#888" /></Ic>,
    <Ic size={12}><path d="M1 4l5 4 5-4" stroke="#555" /></Ic>,
    <Ic size={12}><rect x="1" y="1" width="10" height="10" fill="#c78332" /><rect x="4" y="4" width="4" height="4" fill="#333" /></Ic>,
    <Ic size={12}><rect x="2" y="2" width="8" height="8" fill="#555" /><path d="M1 1h3v3H1zM8 1h3v3H8zM1 8h3v3H1zM8 8h3v3H8z" fill="#c78332" /></Ic>,
    <Ic size={12}><path d="M1 4h3M2.500 2v9M7 3h4M9 3v8" stroke="#222" strokeWidth="1.500" /></Ic>,
    <FaEye size={10} color="#444" />,
  ];
  return (
    <div className="flex items-center h-6 bg-[#f3f3f3] border-t border-[#e4e4e4] pl-[3px] shrink-0">
      {left.map((icon, i) => (
        <span key={i} className={"w-[14.7px] h-[18px] flex items-center justify-center " + ([1, 3, 8, 10, 12, 13].includes(i) ? "bg-[#e4e4e4]" : "")}>{icon}</span>
      ))}
      <span className="ml-[7px] flex bg-[#e9e9e9]">
        {right.map((icon, i) => (
          <span key={i} className={"w-[14.7px] h-[18px] flex items-center justify-center " + (i === 8 ? "bg-[#d4d4d4]" : "")}>{icon}</span>
        ))}
      </span>
    </div>
  );
}

function SidePanel() {
  const icons = [
    <ChevronRight size={12} strokeWidth={3} color="#333" />,
    <Cog size={13} strokeWidth={3} color="#444" />,
    <Link2 size={13} strokeWidth={2.5} color="#444" />,
    <Landmark size={13} strokeWidth={2} color="#333" />,
    <GraduationCap size={13} strokeWidth={2.5} color="#333" />,
    <LayoutPanelTop size={13} strokeWidth={2} color="#333" />,
    <Globe size={13} strokeWidth={2} color="#333" />,
    <Shapes size={13} strokeWidth={2.5} color="#333" />,
  ];
  return (
    <div className="w-[23px] shrink-0 bg-[#f6f6f6] border-l border-[#d8d8d8] flex flex-col">
      {icons.map((icon, i) => (
        <span key={i} className="h-[19.7px] border-b border-[#e4e4e4] flex items-center justify-center shrink-0 first:mt-[2px]">{icon}</span>
      ))}
    </div>
  );
}

export default function App() {
  return (
    <div className="relative w-[1280px] h-[720px] bg-black overflow-hidden flex flex-col font-['Roboto',sans-serif]">
      <div className="h-[14px] shrink-0" />
      {/* header */}
      <div className="flex h-[90px] shrink-0">
        <div className="w-5 shrink-0 flex flex-col">
          <div className="h-5 bg-[#f7f7f7] flex items-center justify-center">
            <svg width="16" height="13" viewBox="0 0 16 13">
              <path d="M1 3l14-2-3 9-3-3-3 1-2 4c-1-2-1-4 0-6z" fill="#1b5f92" />
            </svg>
          </div>
          <div className="flex-1 bg-[#0058a0] flex flex-col items-center pt-[15px] gap-[1px]">
            <span className="w-[6px] h-px bg-[#9cc7e8]" />
            <span className="w-[6px] h-px bg-[#9cc7e8]" />
            <span className="w-[6px] h-px bg-[#9cc7e8]" />
          </div>
        </div>
        <div className="flex-1 min-w-0 flex flex-col">
          <div className="flex items-center h-5 bg-[#e6e6e6] pl-[3px] relative">
            <FaSave size={10} color="#222" className="ml-[2px]" />
            <Undo2 size={11} color="#333" strokeWidth={2.4} className="ml-[19px]" />
            <Redo2 size={11} color="#333" strokeWidth={2.4} className="ml-[2px]" />
            <History size={10} color="#333" className="ml-[3px]" />
            <span className="text-[8.5px] tracking-[-0.14px] text-[#333] ml-[354px] whitespace-nowrap">Tekla Structures - C:\TeklaStructuresModels\Componente PACADAR  - [C  [M.2 - 1]]</span>
            <div className="ml-auto flex items-center text-[#444]">
              <FaQuestionCircle size={10} color="#333" />
              <Timer size={13} color="#444" className="ml-[11px]" />
              <span className="text-[8.5px] tracking-[-0.25px] ml-[5px] whitespace-nowrap text-[#444] w-[80px]">Alejandro Cases Gorbe</span>
              <Minus size={10} className="ml-[9px]" />
              <Copy size={9} className="ml-[9px]" />
              <X size={11} className="ml-[9px] mr-[4px]" />
            </div>
          </div>
          <div className="flex h-[17px] bg-[#f0f0f0] items-start">
            <div className="relative flex text-[8.5px] text-[#444] leading-none pt-[3px] h-full ml-[48px]">
              <span className="w-[49px]">DIBUJO</span>
              <span className="w-[76px]">ANOTACIONES</span>
              <span className="w-[100px]">DIMENSIONAMIENTO</span>
              <span>VISTAS</span>
              <span className="absolute left-[-7px] top-[13px] w-[111px] h-px bg-[#1b6ca8]" />
            </div>
            <div className="ml-auto w-[119px] h-[14px] mt-[1px] bg-white flex items-center pl-[4px] pr-[3px]">
              <span className="text-[8px] italic text-[#888] leading-none">Inicio Rápido</span>
              <Search size={7} color="#444" className="ml-auto" />
            </div>
          </div>
          <Ribbon />
        </div>
      </div>
      {/* drawing area */}
      <div className="flex h-[564px] shrink-0 bg-white">
        <Drawing />
        <SidePanel />
      </div>
      <BottomTools />
      <div className="flex items-center h-4 bg-[#00579f] text-white text-[10.5px] shrink-0 leading-none whitespace-nowrap pl-[1px]">
        <span className="w-[819px]">Actualización de dibujo terminada.</span>
        <span className="w-[59px]">d</span>
        <span className="w-[43px]">0 Pan</span>
        <span className="w-[147px]">Fase actual: 1, Fase 1</span>
        <span>1 objetos y 0 identificadores seleccionados</span>
      </div>
      <div className="h-3 shrink-0" />
      <Dialog />
    </div>
  );
}
